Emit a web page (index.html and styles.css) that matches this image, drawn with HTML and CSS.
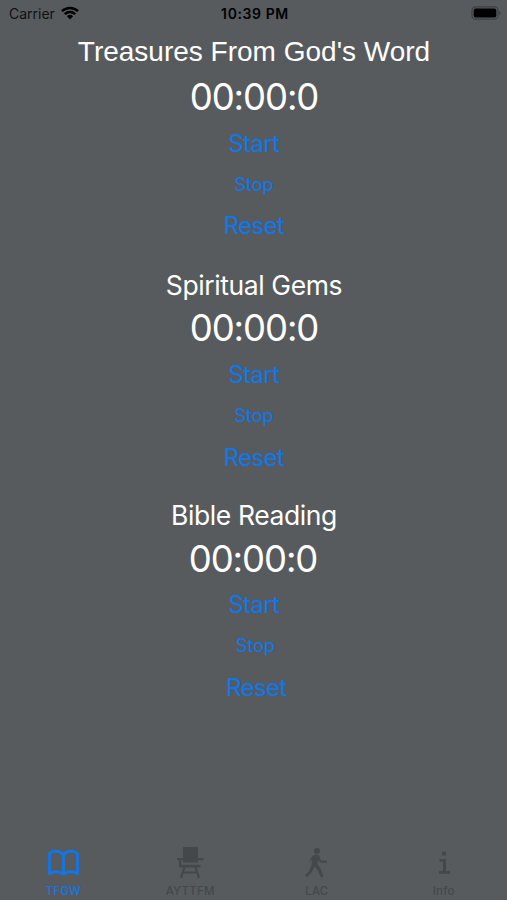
FILE: index.html
```html
<!DOCTYPE html>
<html lang="en">
<head>
    <meta charset="UTF-8">
    <meta name="viewport" content="width=device-width, initial-scale=1.0">
    <title>TFGW</title>
    <link rel="stylesheet" href="styles.css">
</head>
<body>
    <header class="status-bar">
        <div class="carrier">
            <span>Carrier</span>
            <svg class="wifi" viewBox="0 0 18 14" width="18" height="14">
                <path d="M1 5.2a11.5 11.5 0 0 1 16 0M3.8 8.2a7.5 7.5 0 0 1 10.4 0" fill="none" stroke="#000" stroke-width="2.5"/>
                <path d="M5.9 10.2a4.6 4.6 0 0 1 6.2 0L9 13.4z"/>
            </svg>
        </div>
        <div class="clock">10:39 PM</div>
        <div class="battery">
            <svg viewBox="0 0 30 14" width="30" height="14">
                <rect x="1" y=".8" width="26" height="12.4" rx="3.6" fill="none" stroke="#3d4042" stroke-width="1.2"/>
                <rect x="2.7" y="2.5" width="22.6" height="9" rx="2"/>
                <path d="M28.3 5v4q1.4-.7 1.4-2t-1.4-2z" fill="#3d4042"/>
            </svg>
        </div>
    </header>
    <main>
        <section class="timer treasures">
            <h2>Treasures From God's Word</h2>
            <div class="time">00:00:0</div>
            <button class="start">Start</button>
            <button class="stop">Stop</button>
            <button class="reset">Reset</button>
        </section>
        <section class="timer gems">
            <h2>Spiritual Gems</h2>
            <div class="time">00:00:0</div>
            <button class="start">Start</button>
            <button class="stop">Stop</button>
            <button class="reset">Reset</button>
        </section>
        <section class="timer reading">
            <h2>Bible Reading</h2>
            <div class="time">00:00:0</div>
            <button class="start">Start</button>
            <button class="stop">Stop</button>
            <button class="reset">Reset</button>
        </section>
    </main>
    <nav class="tab-bar">
        <a class="tab active">
            <svg viewBox="0 0 34 32" width="34" height="32">
                <path d="M17.500 7.500Q11 1.500 3.500 6.300V26.800q7-4.300 14 .200Q24.500 22.500 31.500 26.800V6.300Q24 1.500 17.500 7.500v19.500" fill="none" stroke="currentColor" stroke-width="2.700" stroke-linejoin="round"/>
            </svg>
            <span>TFGW</span>
        </a>
        <a class="tab">
            <svg viewBox="0 0 34 32" width="34" height="32">
                <path d="M10 0h15v15.500H10zM4 11h26.500v2.300H4zM6 17.800h21.500v2.700H6z" fill="currentColor"/>
                <path d="M7.200 12v7M11.500 20L8 31M22.500 20L26 31M10 25.500h14" fill="none" stroke="currentColor" stroke-width="2.200"/>
            </svg>
            <span>AYTTFM</span>
        </a>
        <a class="tab">
            <svg viewBox="0 0 34 32" width="34" height="32">
                <circle cx="17" cy="4" r="3" fill="currentColor"/>
                <path d="M13 8.500l3-1 3 1 2 5h6v2.200h-7l-2-3-.5 4.500 3 4 3 8.500-2.500 1-3.500-8-3-3-3 6-4.500 4.500-2-2 4-4 2.500-6 .500-5.500-2.500 2-1 4H8.500l1-5z" fill="currentColor"/>
            </svg>
            <span>LAC</span>
        </a>
        <a class="tab">
            <svg viewBox="0 0 34 32" width="34" height="32">
                <circle cx="17" cy="6.500" r="2.200" fill="currentColor"/>
                <path d="M12.500 12H19v12h4v2.700H12V24h4v-9.300h-3.500z" fill="currentColor"/>
            </svg>
            <span>Info</span>
        </a>
    </nav>
</body>
</html>
```

FILE: styles.css
```css
* {
    box-sizing: border-box;
}
body {
    display: flex;
    flex-direction: column;
    height: 900px;
    margin: 0;
    overflow: hidden;
    background-color: #575b5e;
    color: #fff;
    font-family: Inter, "Liberation Sans", sans-serif;
}
.status-bar {
    display: grid;
    grid-template-columns: 1fr auto 1fr;
    align-items: center;
    height: 28px;
    padding: 0 6px 2px 9px;
    color: #101112;
    font-size: 14px;
}
.carrier {
    display: flex;
    align-items: center;
    gap: 6px;
}
.clock {
    font-weight: 600;
    letter-spacing: 0.6px;
    color: #000;
}
.battery {
    display: flex;
    justify-content: flex-end;
}
main {
    flex: 1;
}
.timer {
    display: flex;
    flex-direction: column;
    align-items: center;
    padding-left: 1px;
}
.timer h2 {
    height: 40px;
    margin: 0;
    font-size: 26.5px;
    font-weight: 400;
    line-height: 40px;
    letter-spacing: -0.4px;
}
.time {
    height: 46px;
    font-size: 36.5px;
    line-height: 46px;
    letter-spacing: -1.1px;
}
button {
    padding: 0;
    border: none;
    background: none;
    color: #0f77ee;
    font-family: inherit;
    cursor: pointer;
}
.start,
.reset {
    height: 46px;
    font-size: 24px;
    letter-spacing: -0.6px;
}
.stop {
    height: 37px;
    font-size: 18px;
}
.treasures {
    height: 234px;
    padding-top: 4px;
}
.treasures h2 {
    height: 42px;
    font-family: "Liberation Sans", Arial, sans-serif;
    font-size: 28px;
    letter-spacing: 0;
}
.treasures .stop {
    height: 36px;
}
.gems {
    height: 230px;
    padding-top: 3px;
}
.reading {
    padding-top: 3px;
}
.reading h2 {
    height: 41px;
}
.reading .time {
    margin-left: -2px;
}
.reading .start {
    height: 45px;
}
.reading .stop {
    margin-left: 3px;
}
.reading .reset {
    margin-left: 5px;
}
.tab-bar {
    display: flex;
    height: 53px;
}
.tab {
    flex: 1;
    display: flex;
    flex-direction: column;
    align-items: center;
    color: #44484b;
    font-size: 11.5px;
    font-weight: 500;
    line-height: 14px;
}
.tab span {
    margin-top: 5px;
    letter-spacing: 0.2px;
}
.tab.active {
    color: #0f77ee;
}
```
